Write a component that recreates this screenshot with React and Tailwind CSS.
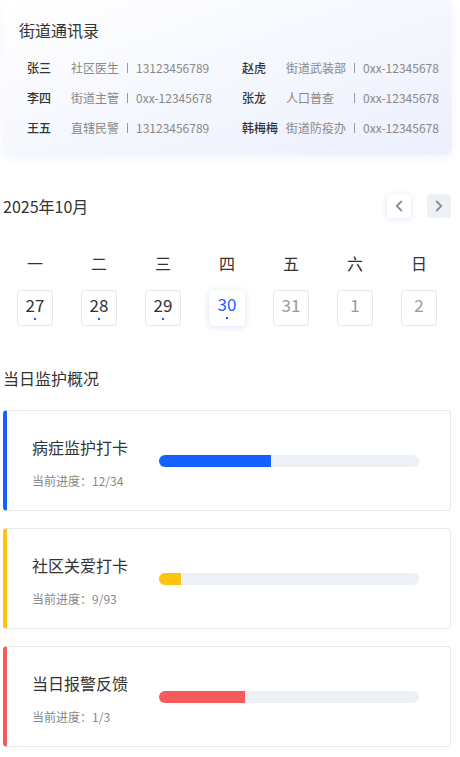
import { ChevronLeft, ChevronRight } from 'lucide-react';

const contacts = [
  [
    { name: '张三', role: '社区医生', phone: '13123456789' },
    { name: '赵虎', role: '街道武装部', phone: '0xx-12345678' },
  ],
  [
    { name: '李四', role: '街道主管', phone: '0xx-12345678' },
    { name: '张龙', role: '人口普查', phone: '0xx-12345678' },
  ],
  [
    { name: '王五', role: '直辖民警', phone: '13123456789' },
    { name: '韩梅梅', role: '街道防疫办', phone: '0xx-12345678' },
  ],
];

const weekdays = ['一', '二', '三', '四', '五', '六', '日'];

const days = [
  { d: 27, dot: true },
  { d: 28, dot: true },
  { d: 29, dot: true },
  { d: 30, dot: true, today: true },
  { d: 31, muted: true },
  { d: 1, muted: true },
  { d: 2, muted: true },
];

const tasks = [
  { title: '病症监护打卡', progress: '12/34', fill: 112, border: 'border-l-[#1660ff]', bar: 'bg-[#1660ff]' },
  { title: '社区关爱打卡', progress: '9/93', fill: 22, border: 'border-l-[#ffc20e]', bar: 'bg-[#ffc20e]' },
  { title: '当日报警反馈', progress: '1/3', fill: 86, border: 'border-l-[#f65a5a]', bar: 'bg-[#f65a5a]' },
];

function ContactCell({ c, roleW }) {
  return (
    <div className="flex items-center h-5 text-[12px]">
      <span className="w-[44px] font-medium text-[#333]">{c.name}</span>
      <span className={`${roleW} text-[#888] whitespace-nowrap`}>{c.role}</span>
      <span className="w-px h-[10px] bg-[#999] mr-2"></span>
      <span className="text-[#888] whitespace-nowrap">{c.phone}</span>
    </div>
  );
}

export default function App() {
  return (
    <div
      className="w-[460px] min-h-[757px] bg-white pl-[3px] text-[#333]"
      style={{ fontFamily: '"Noto Sans CJK SC", "Noto Sans", sans-serif' }}
    >
      <div className="w-[449px]">
        {/* Contacts card */}
        <div className="rounded-lg bg-gradient-to-br from-white to-[#ecf0fd] shadow-[0_2px_10px_rgba(90,110,200,0.08)] pt-5 pb-[17px] pl-4">
          <h2 className="text-[16px] leading-5 text-[#333]">街道通讯录</h2>
          <div className="mt-[18px] flex flex-col gap-[10px] pl-2">
            {contacts.map((row, i) => (
              <div key={i} className="flex">
                <div className="w-[215px]">
                  <ContactCell c={row[0]} roleW="w-[56px]" />
                </div>
                <ContactCell c={row[1]} roleW="w-[68px]" />
              </div>
            ))}
          </div>
        </div>
      </div>

      <div className="w-[448px]">
        {/* Calendar header */}
        <div className="mt-[39px] flex items-center justify-between h-6">
          <span className="text-[16px]">2025年10月</span>
          <div className="flex gap-4">
            <button className="w-6 h-6 rounded bg-white shadow-[0_1px_6px_rgba(60,80,160,0.15)] flex items-center justify-center">
              <ChevronLeft className="w-[18px] h-[18px] text-[#86909c]" strokeWidth={2.4} />
            </button>
            <button className="w-6 h-6 rounded bg-[#edf0f5] flex items-center justify-center">
              <ChevronRight className="w-[18px] h-[18px] text-[#86909c]" strokeWidth={2.4} />
            </button>
          </div>
        </div>

        {/* Weekdays */}
        <div className="mt-[33px] grid grid-cols-7">
          {weekdays.map((w) => (
            <div key={w} className="text-center text-[16px] leading-6 text-[#333]">{w}</div>
          ))}
        </div>

        {/* Dates */}
        <div className="mt-[15px] grid grid-cols-7">
          {days.map((day) => (
            <div key={day.d} className="flex justify-center">
              <div
                className={`relative w-9 h-9 rounded flex justify-center text-[17px] leading-[20px] pt-[4px] ${
                  day.today
                    ? 'bg-white text-[#1660ff] shadow-[0_1px_6px_rgba(60,90,200,0.18)]'
                    : day.muted
                    ? 'border border-[#e5e6eb] text-[#999]'
                    : 'border border-[#e5e6eb] text-[#333]'
                }`}
              >
                {day.d}
                {day.dot && (
                  <span className="absolute left-1/2 -translate-x-1/2 top-[27px] w-[2px] h-[2px] bg-[#1660ff]"></span>
                )}
              </div>
            </div>
          ))}
        </div>

        {/* Monitoring overview */}
        <h2 className="mt-10 text-[16px] leading-6">当日监护概况</h2>
        <div className="mt-5 flex flex-col gap-[17px]">
          {tasks.map((t) => (
            <div
              key={t.title}
              className={`h-[101px] rounded border border-[#e8e8e8] border-l-4 ${t.border} flex items-center pl-[25px]`}
            >
              <div className="w-[127px] flex flex-col pt-1">
                <span className="text-[16px] leading-[22px] text-[#333]">{t.title}</span>
                <span className="mt-[15px] text-[12px] leading-4 text-[#888]">当前进度：{t.progress}</span>
              </div>
              <div className="w-[260px] h-3 rounded-full bg-[#edf0f5] overflow-hidden">
                <div className={`h-full ${t.bar}`} style={{ width: t.fill }}></div>
              </div>
            </div>
          ))}
        </div>
      </div>
    </div>
  );
}
